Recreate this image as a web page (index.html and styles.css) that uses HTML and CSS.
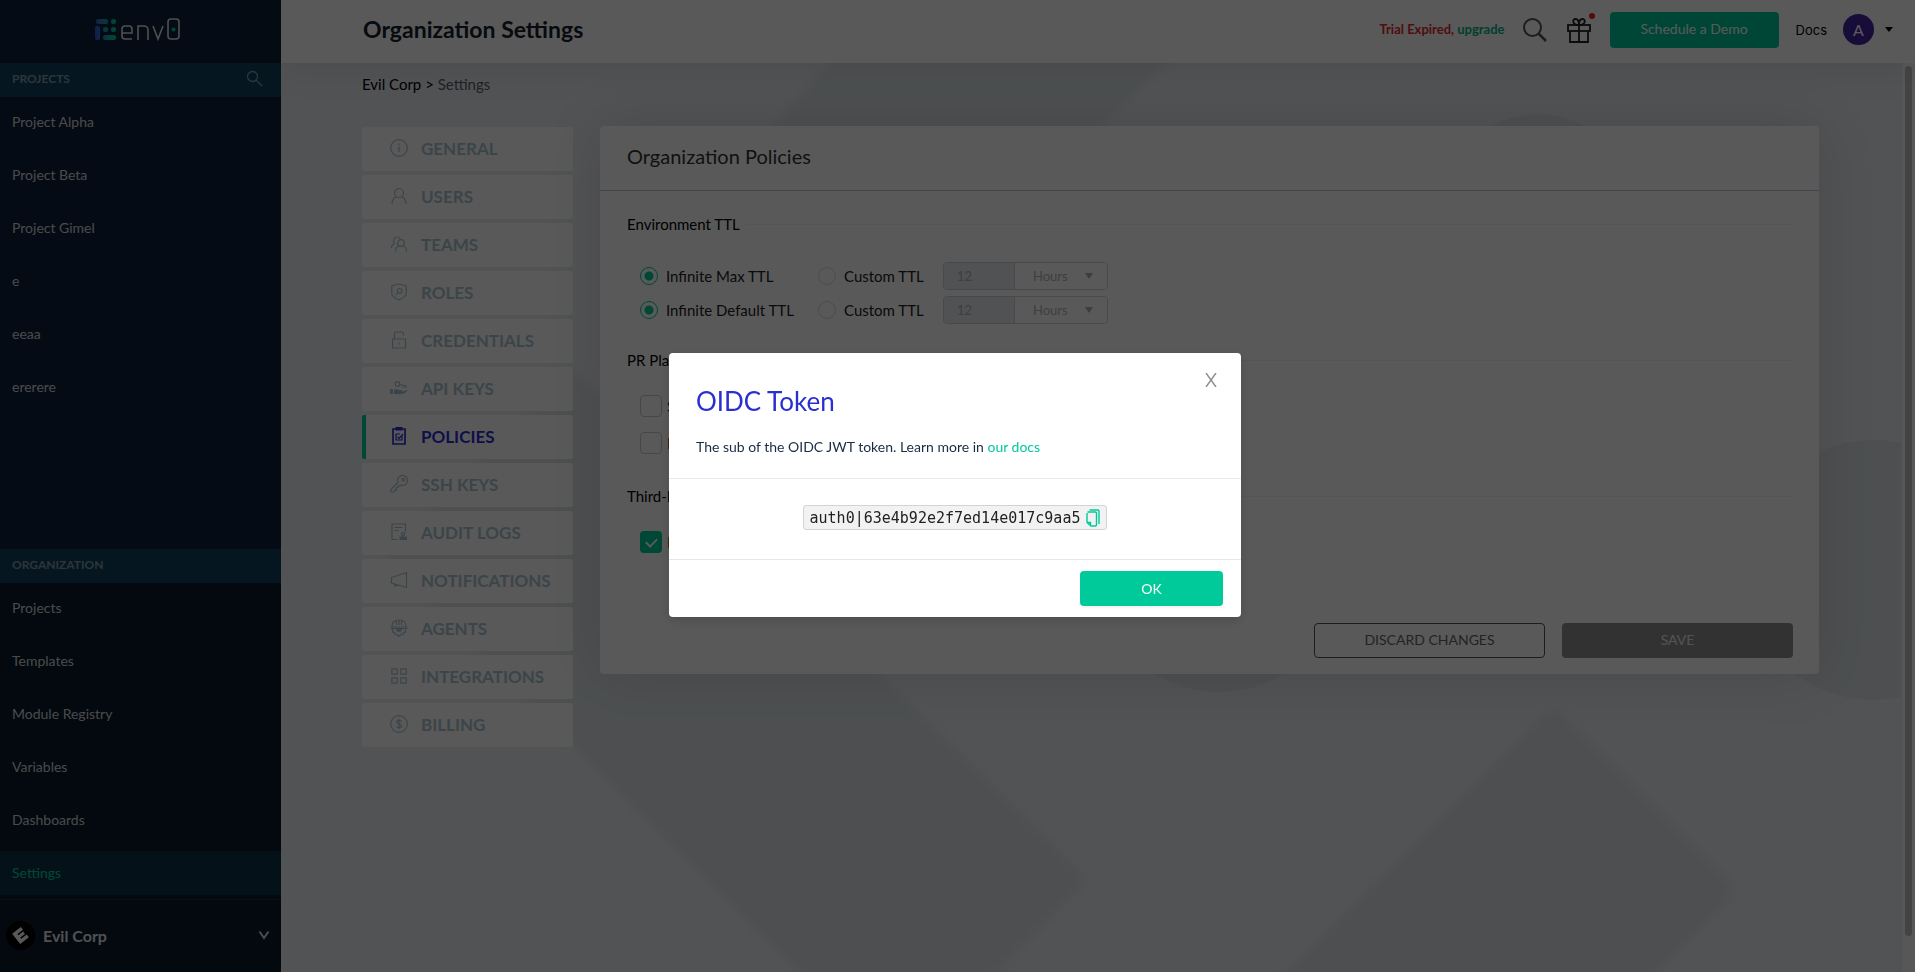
FILE: index.html
```html
<!DOCTYPE html>
<html lang="en">

<head>
    <meta charset="utf-8">
    <title>Organization Settings</title>
    <link rel="stylesheet" href="styles.css">
</head>

<body>

    <aside class="sidebar">
        <div class="logo">
            <svg width="86" height="26" viewBox="0 0 86 26" fill="none">
                <defs>
                    <linearGradient id="logoGradient" x1="0" y1="0" x2="21" y2="0" gradientUnits="userSpaceOnUse">
                        <stop offset="0" stop-color="#3256d8" />
                        <stop offset="0.7" stop-color="#12b3a0" />
                        <stop offset="1" stop-color="#00c990" />
                    </linearGradient>
                </defs>
                <g fill="url(#logoGradient)">
                    <rect x="1" y="2" width="12" height="5" rx="2" />
                    <rect x="16" y="2" width="5" height="5" rx="2" />
                    <rect x="0" y="9" width="5" height="14" rx="2" />
                    <rect x="8" y="10" width="5" height="5" rx="2" />
                    <rect x="16" y="10" width="5" height="5" rx="2" />
                    <rect x="8" y="18" width="13" height="5" rx="2" />
                </g>
                <g stroke="#dfe3e6" stroke-width="1.600">
                    <path d="M37 22H30a3 3 0 0 1-3-3v-7a3 3 0 0 1 3-3h4a3 3 0 0 1 3 3v4H27" />
                    <path d="M43 23V9h6a4 4 0 0 1 4 4v10" />
                    <path d="M58 9l5 13 5-13" />
                    <rect x="73" y="2" width="11" height="20" rx="3" />
                </g>
                <circle cx="78.500" cy="12.500" r="2" fill="#00c990" />
            </svg>
        </div>

        <div class="section-bar">
            <span>PROJECTS</span>
            <svg width="17" height="17" viewBox="0 0 17 17" fill="none" stroke="#7f9aa8" stroke-width="1.300">
                <circle cx="6.500" cy="6.500" r="5" />
                <path d="M10 10l6 6" />
            </svg>
        </div>
        <nav class="side-list projects">
            <a href="#">Project Alpha</a>
            <a href="#">Project Beta</a>
            <a href="#">Project Gimel</a>
            <a href="#">e</a>
            <a href="#">eeaa</a>
            <a href="#">ererere</a>
        </nav>

        <div class="organization">
            <div class="section-bar"><span>ORGANIZATION</span></div>
            <nav class="side-list">
                <a href="#">Projects</a>
                <a href="#">Templates</a>
                <a href="#">Module Registry</a>
                <a href="#">Variables</a>
                <a href="#">Dashboards</a>
                <a href="#" class="selected">Settings</a>
            </nav>
            <button class="org-switch">
                <svg width="29" height="29" viewBox="0 0 29 29">
                    <circle cx="14.500" cy="14.500" r="14.500" fill="#000" />
                    <g transform="rotate(-38 14.500 14.500)" fill="#fff">
                        <path d="M9 8h11v3.500H13v1.500h6v3h-6v1.500h7V21H9z" />
                    </g>
                </svg>
                <span>Evil Corp</span>
                <svg width="12" height="10" viewBox="0 0 12 10" fill="none" stroke="#d5d9db" stroke-width="2">
                    <path d="M1.500 1.500L6 8l4.500-6.500" />
                </svg>
            </button>
        </div>
    </aside>

    <div class="page">
        <header class="topbar">
            <h1>Organization Settings</h1>
            <div class="trial">Trial Expired, <a href="#">upgrade</a></div>
            <button class="icon-button" aria-label="Search">
                <svg width="24" height="24" viewBox="0 0 24 24" fill="none" stroke="#555" stroke-width="2">
                    <circle cx="9.500" cy="9.500" r="8.500" />
                    <path d="M15.500 15.500l7.500 7.500" stroke-width="2.500" />
                </svg>
            </button>
            <button class="icon-button gift" aria-label="What's new">
                <svg width="24" height="26" viewBox="0 0 24 26" fill="none" stroke="#222" stroke-width="1.800">
                    <rect x="1" y="8" width="22" height="6" />
                    <path d="M3 14v11h18V14M12 8v17" />
                    <path d="M12 8C5 8 5 2 8.500 2 11 2 12 5 12 8zM12 8c7 0 7-6 3.500-6C13 2 12 5 12 8z" />
                </svg>
                <span class="dot"></span>
            </button>
            <button class="demo">Schedule a Demo</button>
            <a href="#" class="docs">Docs</a>
            <button class="account" aria-label="Account">
                <span class="avatar">A</span>
                <span class="caret"></span>
            </button>
        </header>

        <main class="content">
            <svg class="backdrop" width="1634" height="909" viewBox="281 63 1634 909" fill="#dde3e6">
                <filter id="soft"><feGaussianBlur stdDeviation="4" /></filter>
                <g filter="url(#soft)">
                    <path d="M840 50H1180L1090 140H760z" />
                    <path d="M574 370L1078 870q10 10 0 20L950 1020H848L390 566q-8-8 0-16z" />
                    <path d="M1543 715q10-10 20 0L1728 880q8 10 0 20L1600 1030H1230z" />
                </g>
                <circle cx="1873" cy="570" r="130" />
                <circle cx="1219" cy="566" r="126" />
                <circle cx="1538" cy="212" r="98" />
            </svg>

            <div class="inner">
                <div class="breadcrumb"><a href="#">Evil Corp</a> <span>&gt;</span> <em>Settings</em></div>

                <div class="columns">
                    <nav class="menu">
                        <a href="#">
                            <svg viewBox="0 0 18 18"><circle cx="9" cy="9" r="8.300" /><path d="M9 7.500v5.500M9 4.500v1.500" /></svg>
                            GENERAL
                        </a>
                        <a href="#">
                            <svg viewBox="0 0 18 18"><circle cx="9" cy="6" r="4.500" /><path d="M2 17c0-4 2-6.500 4.500-7.200M16 17c0-4-2-6.500-4.500-7.200" /></svg>
                            USERS
                        </a>
                        <a href="#">
                            <svg viewBox="0 0 18 18"><circle cx="11" cy="8" r="3.400" /><path d="M5.500 16.500c0-3 1.500-5 3.500-5.700M16.500 16.500c0-3-1.500-5-3.500-5.700M1.500 13c0-2 1-3.500 2.500-4C2.500 4 5 2 7 2c1.500 0 2.500.7 3 1.700" /></svg>
                            TEAMS
                        </a>
                        <a href="#">
                            <svg viewBox="0 0 18 18"><path d="M9 1l7.200 2v8c0 2-3 4-7.200 6-4.200-2-7.200-4-7.200-6V3z" /><circle cx="9.700" cy="7.800" r="2.300" /><path d="M8 9.500l-2 2.300" /></svg>
                            ROLES
                        </a>
                        <a href="#">
                            <svg viewBox="0 0 18 18"><path d="M2.500 8h13v9h-13zM4.500 8V3q0-2 2-2h5q2 0 2 2v1.500M9 11.500v2" /></svg>
                            CREDENTIALS
                        </a>
                        <a href="#">
                            <svg viewBox="0 0 18 18"><circle cx="7.500" cy="5" r="2.300" /><path d="M10 5.500l6.500 1.500M13 6.500v2M15.500 7v2" /><path class="solid" d="M0 10h3v5H0zM4 10.500c2-1 3-.5 4.500.5h3c1 0 1 1.500 0 1.500h1.500l4-1.500c1 0 0 2-3 3.500-3 1-6 .5-10 .5z" /></svg>
                            API KEYS
                        </a>
                        <a href="#" class="active">
                            <svg viewBox="0 0 18 18"><path d="M3 2h12v15H3z" stroke-width="1.700" /><path class="solid" d="M5.500 0h7v3.500h-7z" /><path d="M12 9v4H6V7h4" /><path d="M7.500 9.500l1.500 2 4-4.500" /></svg>
                            POLICIES
                        </a>
                        <a href="#">
                            <svg viewBox="0 0 18 18"><path d="M8 7.500A5 5 0 1 1 10.500 10L9.500 11H8v1.500H6.500v2H5v1.500l-1.500 1H.8v-2.500z" /><circle cx="13.300" cy="4.700" r="1.300" /></svg>
                            SSH KEYS
                        </a>
                        <a href="#">
                            <svg viewBox="0 0 18 18"><path d="M7.500 16.500H2V1h13.500v7.500M4.500 4.500h8M4.500 7.500h4" /><circle cx="13" cy="11" r="1.600" /><path d="M13 12v2" /><path class="solid" d="M9.500 13.500H17v3.500H9.500z" /></svg>
                            AUDIT LOGS
                        </a>
                        <a href="#">
                            <svg viewBox="0 0 18 18"><path d="M1.500 6.500L16.500 1.500v15l-15-4.500zM4 12.500c0 3 3.500 3 4 1" /></svg>
                            NOTIFICATIONS
                        </a>
                        <a href="#">
                            <svg viewBox="0 0 18 18"><path d="M2 7.500C2 3 5 1 9 1s7 2 7 6.500M.5 8h17M.5 9.500h17M6.500 2v4M11.500 2v4M9 1v5" /><path d="M2.500 10v3l2 .5.500 2h2L9 17.500l2-2h2l.5-2 2-.5v-3" /><path class="solid" d="M6 10h6c0 4-6 4-6 0z" /></svg>
                            AGENTS
                        </a>
                        <a href="#">
                            <svg viewBox="0 0 18 18"><path d="M1.800 1.800h5.400v5.400H1.800zM10.800 1.800h5.400v5.400h-5.400zM1.800 10.800h5.400v5.400H1.800zM10.800 10.800h5.400v5.400h-5.400z" /></svg>
                            INTEGRATIONS
                        </a>
                        <a href="#">
                            <svg viewBox="0 0 18 18"><circle cx="9" cy="9" r="8.300" /><path d="M11.500 6.500C11 4.800 6.700 4.800 6.700 7c0 2.300 4.900 1.400 4.900 4 0 2.300-4.700 2.200-5.100 0M9 3.800v10.400" /></svg>
                            BILLING
                        </a>
                    </nav>

                    <section class="card">
                        <h2>Organization Policies</h2>
                        <div class="card-body">
                            <h3>Environment TTL</h3>
                            <div class="group ttl">
                                <div class="ttl-row">
                                    <label class="infinite"><input type="radio" name="max" checked>Infinite Max TTL</label>
                                    <label class="custom"><input type="radio" name="max">Custom TTL</label>
                                    <div class="duration">
                                        <input type="text" value="12" aria-label="Max TTL" disabled>
                                        <select aria-label="Max TTL unit" disabled>
                                            <option>Hours</option>
                                        </select>
                                    </div>
                                </div>
                                <div class="ttl-row">
                                    <label class="infinite"><input type="radio" name="default" checked>Infinite Default TTL</label>
                                    <label class="custom"><input type="radio" name="default">Custom TTL</label>
                                    <div class="duration">
                                        <input type="text" value="12" aria-label="Default TTL" disabled>
                                        <select aria-label="Default TTL unit" disabled>
                                            <option>Hours</option>
                                        </select>
                                    </div>
                                </div>
                            </div>

                            <h3>PR Plans</h3>
                            <div class="group checks">
                                <label><input type="checkbox">Skip</label>
                                <label><input type="checkbox">Plan</label>
                            </div>

                            <h3>Third-Party</h3>
                            <div class="group checks">
                                <label><input type="checkbox" checked>Enable</label>
                            </div>
                        </div>
                        <div class="card-actions">
                            <button class="discard">DISCARD CHANGES</button>
                            <button class="save">SAVE</button>
                        </div>
                    </section>
                </div>
            </div>

            <div class="scrollbar"><div class="thumb"></div></div>
        </main>
    </div>

    <div class="overlay">
        <div class="modal" role="dialog" aria-labelledby="modalTitle">
            <button class="close" aria-label="Close">
                <svg width="12" height="14" viewBox="0 0 12 14" fill="none" stroke="#8c8c8c" stroke-width="1.400">
                    <path d="M1 0l10 14M11 0L1 14" />
                </svg>
            </button>
            <div class="modal-head">
                <h2 id="modalTitle">OIDC Token</h2>
                <p>The sub of the OIDC JWT token. Learn more in <a href="#">our docs</a></p>
            </div>
            <div class="modal-body">
                <code>auth0|63e4b92e2f7ed14e017c9aa5
                    <button class="copy" aria-label="Copy">
                        <svg width="14" height="18" viewBox="0 0 14 18" fill="none" stroke="#00c99a" stroke-width="1.400">
                            <path d="M1.500 3h8q1 0 1 1v12q0 1-1 1H5l-4-3.500V4M1.500 13.500H4.500V16" />
                            <path d="M3.500 1H12q1 0 1 1v13" />
                        </svg>
                    </button>
                </code>
            </div>
            <div class="modal-foot">
                <button class="ok">OK</button>
            </div>
        </div>
    </div>

</body>

</html>
```

FILE: styles.css
```css
* {
    box-sizing: border-box;
}

body {
    margin: 0;
    display: flex;
    height: 100vh;
    overflow: hidden;
    font-family: Lato, "Open Sans", sans-serif;
    font-size: 15px;
    color: #000;
}

a {
    color: inherit;
    text-decoration: none;
}

button {
    font: inherit;
    padding: 0;
    border: none;
    background: none;
    cursor: pointer;
}

h1, h2, h3, p {
    margin: 0;
    font-weight: normal;
}

/* Sidebar */

.sidebar {
    flex: none;
    width: 281px;
    display: flex;
    flex-direction: column;
    background: #0f2239;
    color: #d0d5d9;
    font-size: 14px;
}

.logo {
    height: 63px;
    display: flex;
    align-items: center;
    justify-content: center;
    padding-bottom: 4px;
    padding-right: 5px;
}

.section-bar {
    height: 34px;
    padding: 0 18px 3px 12px;
    display: flex;
    align-items: center;
    justify-content: space-between;
    background: #12415c;
    color: #7f9aa8;
    font-size: 12px;
    font-weight: bold;
}

.side-list {
    display: flex;
    flex-direction: column;
    gap: 9px;
    padding: 3px 0 4px;
}

.side-list a {
    height: 44px;
    line-height: 44px;
    padding-left: 12px;
}

.side-list .selected {
    background: #103249;
    color: #00cd9c;
}

.organization {
    margin-top: auto;
    background: #0a1c29;
}

.org-switch {
    width: 100%;
    height: 73px;
    padding: 0 11px 2px 6px;
    display: flex;
    align-items: center;
    gap: 8px;
    border-top: 1px solid #172a38;
    color: #e3e6e8;
    font-size: 16px;
    font-weight: bold;
}

.org-switch span {
    flex: 1;
    text-align: left;
}

/* Top bar */

.page {
    flex: 1;
    min-width: 0;
    display: flex;
    flex-direction: column;
}

.topbar {
    position: relative;
    z-index: 1;
    flex: none;
    height: 63px;
    padding: 0 22px 4px 82px;
    display: flex;
    align-items: center;
    background: #fff;
    box-shadow: 0 0 40px rgba(0, 0, 0, 0.12);
}

.topbar h1 {
    flex: 1;
    font-size: 23px;
    line-height: 28px;
    padding-bottom: 2px;
    font-weight: bold;
    color: #15212b;
}

.trial {
    margin-right: 18px;
    padding-bottom: 2px;
    font-size: 13px;
    font-weight: bold;
    color: #e5282d;
}

.trial a {
    color: #00b589;
}

.icon-button {
    position: relative;
    display: flex;
    margin-right: 20px;
}

.gift {
    margin-right: 19px;
}

.dot {
    position: absolute;
    top: -4px;
    right: -4px;
    width: 6px;
    height: 6px;
    border-radius: 50%;
    background: #e5282d;
}

.demo {
    width: 169px;
    height: 36px;
    padding-bottom: 2px;
    border-radius: 4px;
    background: #00c99a;
    color: #fff;
    font-size: 14px;
}

.docs {
    margin: 0 16px 0 17px;
    font-family: Inter, sans-serif;
    font-size: 13px;
}

.account {
    display: flex;
    align-items: center;
    gap: 11px;
}

.avatar {
    width: 31px;
    height: 31px;
    line-height: 31px;
    border-radius: 50%;
    background: #4524a0;
    color: #fff;
    font-size: 16px;
}

.caret {
    border: 4px solid transparent;
    border-top: 5px solid #000;
    border-bottom: none;
}

/* Content */

.content {
    position: relative;
    flex: 1;
    display: flex;
    background: #eaedf2;
}

.backdrop {
    position: absolute;
    right: 0;
    top: 0;
}

.inner {
    position: relative;
    flex: 1;
    padding: 0 82px 0 81px;
}

.breadcrumb {
    height: 63px;
    line-height: 43px;
}

.breadcrumb em {
    font-style: normal;
    color: #5a6268;
}

.columns {
    display: flex;
    align-items: flex-start;
    gap: 27px;
}

.menu {
    flex: none;
    width: 211px;
    display: flex;
    flex-direction: column;
    gap: 4px;
    padding-top: 1px;
}

.menu a {
    height: 44px;
    padding: 0 0 2px 28px;
    display: flex;
    align-items: center;
    gap: 13px;
    border-radius: 2px;
    background: #fff;
    color: #a9c5d0;
    font-size: 17px;
    font-weight: bold;
}

.menu .active {
    padding-left: 24px;
    border-left: 4px solid #00cd9c;
    color: #2d2fd2;
}

.menu svg {
    width: 18px;
    height: 18px;
    fill: none;
    stroke: currentColor;
    stroke-width: 1.2;
}

.menu .solid {
    fill: currentColor;
    stroke: none;
}

.card {
    flex: 1;
    border-radius: 4px;
    background: #fff;
    box-shadow: 0 0 60px rgba(0, 0, 0, 0.12);
}

.card h2 {
    height: 65px;
    padding: 0 27px;
    line-height: 60px;
    border-bottom: 1px solid #b4ccd4;
    font-size: 20px;
    color: #333;
}

.card-body {
    padding: 21px 26px 0 27px;
}

.card h3 {
    display: flex;
    align-items: center;
    gap: 6px;
    font-size: 15px;
    line-height: 24px;
}

.card h3::after {
    content: "";
    flex: 1;
    border-top: 1px solid #f4f4f4;
}

.group {
    padding: 23px 0 0 13px;
    display: flex;
    flex-direction: column;
}

.group label {
    display: flex;
    align-items: center;
    color: #222;
}

.group.ttl {
    gap: 6px;
    padding-top: 26px;
    padding-bottom: 24px;
}

.ttl-row {
    display: flex;
    align-items: center;
    height: 28px;
}

.infinite {
    width: 178px;
}

.custom {
    width: 125px;
}

.ttl-row input[type=radio] {
    appearance: none;
    width: 18px;
    height: 18px;
    margin: 0 8px 0 0;
    border: 1px solid #d9d9d9;
    border-radius: 50%;
}

.ttl-row input[type=radio]:checked {
    border-color: #00cd9c;
    background: radial-gradient(circle, #00cd9c 4px, #fff 5px);
}

.duration {
    position: relative;
    display: flex;
    height: 28px;
    border: 1px solid #ccd0d3;
    border-radius: 4px;
    overflow: hidden;
}

.duration input,
.duration select {
    appearance: none;
    margin: 0;
    border: none;
    border-radius: 0;
    font: inherit;
    font-size: 13px;
    color: #b5b5b5;
    opacity: 1;
}

.duration input {
    width: 71px;
    padding: 0 13px;
    border-right: 1px solid #ccd0d3;
    background: #e6eaf0;
}

.duration select {
    width: 92px;
    padding: 0 18px;
    background: #fff;
}

.duration::after {
    content: "";
    position: absolute;
    right: 14px;
    top: 10px;
    border: 4px solid transparent;
    border-top: 6px solid #b0b0b0;
    border-bottom: none;
}

.group.checks {
    gap: 15px;
    padding-bottom: 30px;
}

.checks input {
    appearance: none;
    width: 22px;
    height: 22px;
    margin: 0 5px 0 0;
    border: 1px solid #ccc;
    border-radius: 4px;
}

.checks input:checked {
    position: relative;
    border: none;
    background: #00cd9c;
}

.checks input:checked::after {
    content: "";
    position: absolute;
    left: 8px;
    top: 5px;
    width: 5px;
    height: 9px;
    border: solid #fff;
    border-width: 0 2px 2px 0;
    transform: rotate(45deg);
}

.card-actions {
    display: flex;
    justify-content: flex-end;
    gap: 17px;
    padding: 40px 26px 16px;
}

.card-actions button {
    width: 231px;
    height: 35px;
    padding-bottom: 3px;
    border-radius: 4px;
    font-size: 14px;
}

.card-actions .discard {
    border: 1px solid #555;
    color: #666;
}

.card-actions .save {
    background: #909090;
    color: #ededed;
}

.scrollbar {
    position: relative;
    width: 14px;
    padding: 3px 3px 36px;
    background: #fafafa;
    border-left: 1px solid #e8e8e8;
}

.thumb {
    height: 100%;
    border-radius: 4px;
    background: #c1c1c1;
}

/* Modal */

.overlay {
    position: fixed;
    inset: 0;
    z-index: 10;
    display: flex;
    align-items: center;
    justify-content: center;
    padding: 0 5px 2px 0;
    background: rgba(0, 0, 0, 0.65);
}

.modal {
    position: relative;
    width: 572px;
    border-radius: 4px;
    background: #fff;
    box-shadow: 0 4px 12px rgba(0, 0, 0, 0.15);
}

.close {
    position: absolute;
    top: 20px;
    right: 24px;
    display: flex;
}

.modal-head {
    padding: 32px 27px 20px;
    border-bottom: 1px solid #e8e8e8;
}

.modal-head h2 {
    font-size: 26px;
    line-height: 32px;
    color: #2a30cf;
}

.modal-head p {
    margin-top: 19px;
    font-size: 14px;
    line-height: 22px;
    color: #192b43;
}

.modal-head p a {
    color: #00c99a;
}

.modal-body {
    display: flex;
    justify-content: center;
    padding: 26px 0 29px;
    border-bottom: 1px solid #e8e8e8;
}

.modal-body code {
    display: flex;
    align-items: center;
    gap: 6px;
    height: 25px;
    padding: 0 6px;
    border: 1px solid #d3d3d3;
    border-radius: 3px;
    background: #f2f2f2;
    color: #222;
    font-family: "DejaVu Sans Mono", monospace;
    font-size: 15px;
}

.copy {
    display: flex;
}

.modal-foot {
    display: flex;
    justify-content: flex-end;
    padding: 11px 18px 11px;
}

.ok {
    width: 143px;
    height: 35px;
    padding-bottom: 1px;
    border-radius: 4px;
    background: #00c99a;
    box-shadow: 0 2px 2px rgba(0, 0, 0, 0.05);
    color: #fff;
    font-size: 14px;
}
```
